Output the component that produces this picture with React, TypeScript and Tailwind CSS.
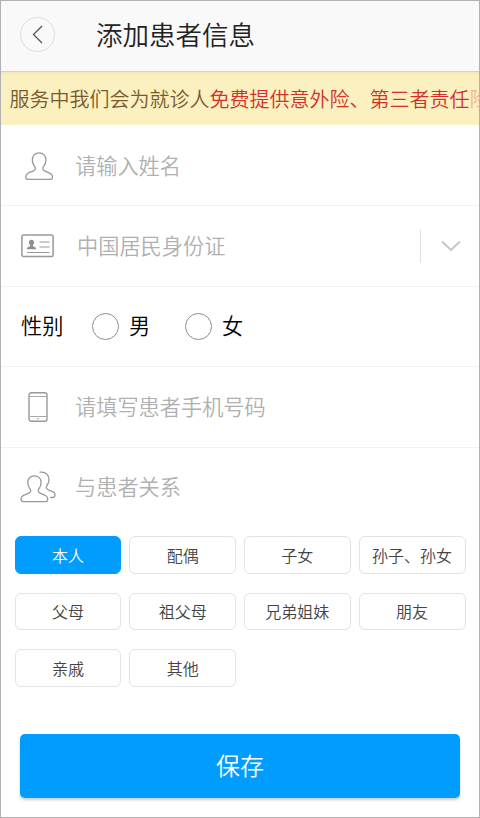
import { useState } from 'react';
import type { ReactNode } from 'react';

const RELATIONS = [
  '本人',
  '配偶',
  '子女',
  '孙子、孙女',
  '父母',
  '祖父母',
  '兄弟姐妹',
  '朋友',
  '亲戚',
  '其他',
];

const GENDERS = ['男', '女'];

function PersonIcon() {
  return (
    <svg className="w-7 h-7 mt-px ml-px" viewBox="0 0 28 28" fill="none" stroke="#999" strokeWidth={1.3}>
      <path strokeLinejoin="round" d="M14.2 .8C10 .8 7.3 4 7.3 8c0 3 1.2 5 2.4 6.600.9 1.200.9 2.800-.2 3.600C7.600 19.600 5.200 20 3 21.200 1.300 22.200.7 23.400.7 25c0 1.500.9 2.300 2.300 2.300h22.400c1.300 0 2.100-.8 2.100-2.200 0-1.700-.7-2.800-2.300-3.700-2.300-1.300-4.600-1.800-6.500-3.200-1.100-.8-1.100-2.300-.2-3.500C19.800 13 21 11 21 8c0-4-2.700-7.200-6.800-7.200z" />
    </svg>
  );
}

function IdCardIcon() {
  return (
    <svg className="w-[33px] h-6 -ml-0.5 -mt-px" viewBox="0 0 33 24" fill="none" stroke="#999" strokeWidth={1.5}>
      <rect x=".9" y="1" width="31.200" height="21.500" rx="1.500" />
      <path strokeWidth={1.200} d="M18.500 8h10M18.500 13h10M6 18.500h22.500" />
      <path fill="#8f8f8f" stroke="none" d="M10.500 5.700c-1.700 0-2.600 1.200-2.600 2.700 0 1 .5 1.900 1.200 2.500v1.300c-1.500.6-3.300.9-3.300 3h9.400c0-2.100-1.800-2.400-3.300-3v-1.300c.7-.6 1.200-1.500 1.200-2.500 0-1.500-.9-2.700-2.600-2.700z" />
    </svg>
  );
}

function PhoneIcon() {
  return (
    <svg className="w-5 h-[30px] -mt-px" viewBox="0 0 20 30" fill="none" stroke="#999">
      <rect x="1" y=".8" width="18" height="28.400" rx="2.200" strokeWidth={1.400} />
      <path d="M1 4.500h18M1 24.500h18" stroke="#aaa" />
      <path d="M8.800 26.800h2.400" stroke="#aaa" />
    </svg>
  );
}

function PeopleIcon() {
  return (
    <svg className="w-9 h-8 -mt-0.5" viewBox="0 0 36 32" fill="none" stroke="#999" strokeWidth={1.3} strokeLinecap="round" strokeLinejoin="round">
      <path d="M14.300 4.800c-4 0-6.500 3-6.500 6.700 0 2.800 1.100 4.800 2.300 6.400.9 1.200.8 2.700-.3 3.500-1.800 1.400-3.900 1.800-6.300 3C1.900 25.200 1 26.500 1 28.200c0 1.500.9 2.400 2.400 2.400h22c1.500 0 2.400-.9 2.400-2.400 0-1.600-.8-2.800-2.400-3.700-2.300-1.300-4.500-1.700-6.300-3.100-1.100-.8-1.200-2.300-.3-3.500 1.200-1.600 2.300-3.600 2.300-6.400 0-3.800-2.600-6.700-6.800-6.700z" />
      <path d="M20 1.200c5.300-.9 9 2.500 9 7.500 0 2.600-1 4.300-2.100 6-.9 1.400-.7 2.700.5 3.600 1.500 1.100 3.700 1.600 5.600 2.600 1.400.8 2.100 1.900 2 3.300-.1 1.500-1.100 2.300-2.500 2.300h-2" />
    </svg>
  );
}

function FormRow({ icon, children }: { icon: ReactNode; children: ReactNode }) {
  return (
    <div className="flex items-center h-full">
      <div className="w-[74px] shrink-0 flex justify-center">{icon}</div>
      {children}
    </div>
  );
}

export default function App() {
  const [gender, setGender] = useState<string | null>(null);
  const [relation, setRelation] = useState('本人');

  return (
    <div className="w-[480px] h-[818px] flex flex-col bg-white border border-[#b1b1b1] overflow-hidden font-['Noto_Sans_CJK_SC',sans-serif] font-[350]">
      {/* Header */}
      <header className="h-[71px] shrink-0 flex items-center bg-[#f9f9f9] border-b border-[#d6d3bd] pl-[19px]">
        <button className="w-[35px] h-[35px] shrink-0 -mt-[3px] rounded-full border border-[#dedede] flex items-center justify-center">
          <svg className="w-[11px] h-[19px]" viewBox="0 0 11 19" fill="none" stroke="#555" strokeWidth={1.300}>
            <path d="M10 1L1.500 9.500 10 18" />
          </svg>
        </button>
        <h1 className="ml-[41px] pb-1 text-[26.500px] leading-none text-[#222]">添加患者信息</h1>
      </header>

      {/* Notice */}
      <div className="h-[53px] shrink-0 flex items-center bg-linear-to-b from-[#f3e8b8] from-0% to-[#fbf0c0] to-8% pl-[8.500px] text-[20px] leading-none text-[#7a5a2c] whitespace-nowrap overflow-hidden">
        <span>服务中我们会为就诊人</span>
        <span className="text-[#d4302b]">免费提供意外险、第三者责任</span>
        <span className="text-[#eeb59a]">险</span>
      </div>

      {/* Form */}
      <div className="grid grid-rows-[81px_81px_80px_81px_80px] shrink-0 text-[21.200px] leading-none text-[#b0b0b0]">
        <div className="border-b border-[#f2f2f2]">
          <FormRow icon={<PersonIcon />}>
            <span>请输入姓名</span>
          </FormRow>
        </div>
        <div className="border-b border-[#f2f2f2]">
          <FormRow icon={<IdCardIcon />}>
            <span className="flex-1 pl-0.5 pb-0.5">中国居民身份证</span>
            <span className="w-px h-[33px] bg-[#dedede]" />
            <svg className="w-5 h-3 ml-5 mr-[18px]" viewBox="0 0 20 12" fill="none" stroke="#c4c4c4" strokeWidth={1.800}>
              <path d="M1 1.500l9 8.500 9-8.500" />
            </svg>
          </FormRow>
        </div>
        <div className="flex items-center border-b border-[#f2f2f2] pl-5 text-black">
          <span className="w-[71px] pb-[3px]">性别</span>
          {GENDERS.map((g) => (
            <button key={g} onClick={() => setGender(g)} className="flex items-center gap-2.5 w-[93px]">
              <span className="w-[27px] h-[27px] rounded-full border border-[#8c8c8c] flex items-center justify-center">
                {gender === g && <span className="w-3.5 h-3.5 rounded-full bg-[#009dff]" />}
              </span>
              <span className="pb-[3px]">{g}</span>
            </button>
          ))}
        </div>
        <div className="border-b border-[#f2f2f2]">
          <FormRow icon={<PhoneIcon />}>
            <span className="pb-0.5">请填写患者手机号码</span>
          </FormRow>
        </div>
        <FormRow icon={<PeopleIcon />}>
          <span className="pb-1">与患者关系</span>
        </FormRow>
      </div>

      {/* Relations */}
      <div className="grid grid-cols-4 gap-x-[7.700px] gap-y-[19px] pl-[13.500px] pr-[13.500px] mt-[8px] shrink-0">
        {RELATIONS.map((item) => (
          <button
            key={item}
            onClick={() => setRelation(item)}
            className={`h-[37.500px] rounded-md border text-base leading-none whitespace-nowrap ${
              relation === item ? 'bg-[#009dff] border-[#009dff] text-white' : 'bg-white border-[#e2e2e2] text-[#444]'
            }`}
          >
            {item}
          </button>
        ))}
      </div>

      {/* Save */}
      <button className="h-16 shrink-0 mx-[19px] mt-[47px] rounded-[5px] bg-[#009dff] pb-0.5 text-2xl leading-none text-white shadow-[0_2px_3px_rgba(0,0,0,0.2)]">
        保存
      </button>
    </div>
  );
}
